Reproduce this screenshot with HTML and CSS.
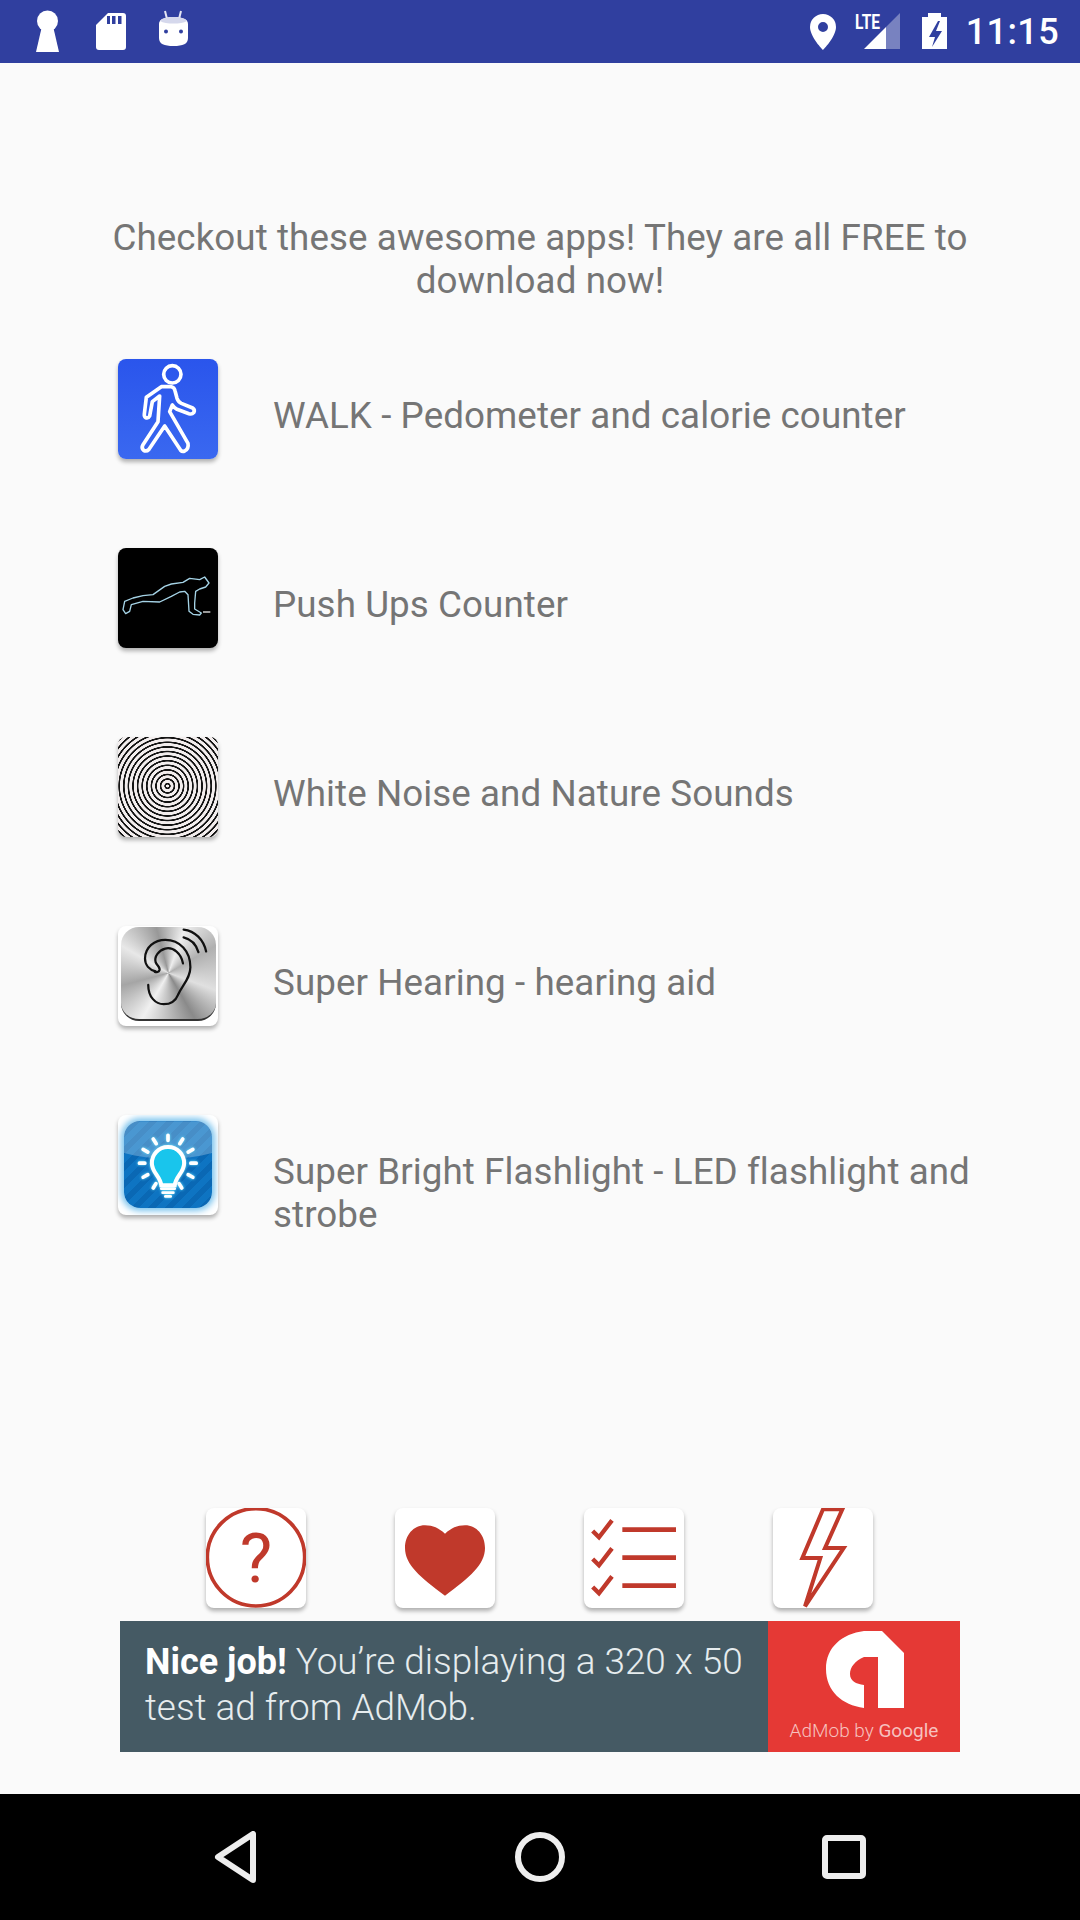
FILE: index.html
```html
<!DOCTYPE html>
<html lang="en">
<head>
<meta charset="utf-8">
<title>Apps</title>
<link rel="stylesheet" href="styles.css">
</head>
<body>
<div class="screen">
  <header class="status">
    <svg class="status-left" viewBox="0 0 200 63" width="200" height="63">
      <circle cx="47.5" cy="21" r="10.5" fill="#fff"/>
      <path d="M42 26h11l6 26H36z" fill="#fff"/>
      <path d="M108 13h15a3 3 0 0 1 3 3v31a3 3 0 0 1-3 3H99a3 3 0 0 1-3-3V25z" fill="#fff"/>
      <path d="M107 16h3v8h-3zM112 16h3.500v8H112zM118 16h3.500v8H118z" fill="#303f9f"/>
      <path d="M165 11l2 8M181 11l-2 8" stroke="#e4e6f3" stroke-width="2" fill="none"/>
      <path d="M159 24c0-5 6-7 14.500-7s14.500 2 14.500 7v14c0 6-5 8-14.500 8s-14.500-2-14.500-8z" fill="#fff"/>
      <path d="M160 21c2-3 7-4 13.500-4s11.500 1 13.500 4c-3 2-8 2.500-13.500 2.500S163 23 160 21z" fill="#d5d8ec"/>
      <circle cx="166" cy="31.500" r="2" fill="#303f9f"/><circle cx="181" cy="31.500" r="2" fill="#303f9f"/>
    </svg>
    <div class="status-right">
      <svg viewBox="800 0 160 63" width="160" height="63">
        <path fill-rule="evenodd" d="M823 14a13 13 0 0 0-13 13c0 10 13 23 13 23s13-13 13-23a13 13 0 0 0-13-13zm0 8a5 5 0 1 1 0 10 5 5 0 0 1 0-10z" fill="#fff"/>
        <text class="lte" x="855" y="29" textLength="25" lengthAdjust="spacingAndGlyphs">LTE</text>
        <path d="M864 49l22-22v22z" fill="#fff"/>
        <path d="M886 27l14-14v36h-14z" fill="#fff" opacity=".35"/>
        <path d="M928 17v-4h13v4h6v32h-25V17z" fill="#fff"/>
        <path d="M938 21l-9 16h6l-3 10 10-16h-6l4-10z" fill="#303f9f"/>
      </svg>
      <span class="clock">11:15</span>
    </div>
  </header>

  <main class="content">
    <p class="intro">Checkout these awesome apps! They are all FREE to download now!</p>
    <ul class="apps">
      <li class="app">
        <div class="tile tile-walk">
          <svg viewBox="55 57 300 300" class="art">
            <circle cx="218" cy="103" r="26" fill="none" stroke="#fff" stroke-width="11"/>
            <path d="M185 140L215 140Q224 142 226 152L232 175Q236 186 245 190L279 204Q287 210 282 218Q277 224 268 221L232 208Q224 204 218 195L210 215L265 310Q268 326 255 333Q248 336 243 331L195 258L148 328Q140 336 132 331Q124 324 130 314L175 245L180 168L158 185L150 228Q146 236 138 233Q133 230 134 222L140 172z" fill="none" stroke="#fff" stroke-width="11" stroke-linejoin="round"/>
          </svg>
        </div>
        <span class="app-name">WALK - Pedometer and calorie counter</span>
      </li>
      <li class="app">
        <div class="tile tile-push">
          <svg viewBox="55 625 300 300" class="art">
            <path d="M75 785L100 775 130 768 160 765 195 740 215 733 250 728 270 716 300 720 315 712 328 730 318 742 300 748 288 755 285 790 285 808 305 820 300 826 280 824 268 815 265 765 255 755 240 757 215 770 180 787 130 785 95 795 90 815 78 822 70 810z" fill="none" stroke="#a5d3e6" stroke-width="4" stroke-linejoin="round"/>
            <path d="M310 817h22" stroke="#999" stroke-width="6"/>
          </svg>
        </div>
        <span class="app-name">Push Ups Counter</span>
      </li>
      <li class="app">
        <div class="tile tile-noise"></div>
        <span class="app-name">White Noise and Nature Sounds</span>
      </li>
      <li class="app">
        <div class="tile tile-hear">
          <div class="metal">
            <svg viewBox="62 52 286 286" class="art">
              <path d="M165 190c-20-5-33-20-33-40 0-35 30-58 63-58 45 0 78 35 78 85 0 35-25 55-38 85-8 20-25 30-45 30-25 0-48-22-48-60" fill="none" stroke="#111" stroke-width="7" stroke-linecap="round"/>
              <path d="M250 165c-5-30-30-52-55-46-20 5-35 25-30 42 3 10 15 15 12 25-2 6-10 8-15 5" fill="none" stroke="#111" stroke-width="7" stroke-linecap="round"/>
              <path d="M252 84c24 6 40 24 46 46M252 60c36 4 62 32 70 68" fill="none" stroke="#111" stroke-width="7" stroke-linecap="round"/>
            </svg>
          </div>
        </div>
        <span class="app-name">Super Hearing - hearing aid</span>
      </li>
      <li class="app">
        <div class="tile tile-bulb">
          <div class="glow">
            <svg viewBox="73 635 262 258" class="art">
              <path d="M73 635h262v95c-80 22-180 22-262 0z" fill="#fff" opacity=".25"/>
              <g class="bulb">
                <g stroke="#fff" stroke-width="11" stroke-linecap="round" fill="none">
                  <path d="M204 677v15M160 688l9 14M130 719l14 8M119 760h16M130 802l14-8M160 834l8-13M248 688l-9 14M278 719l-14 8M288 760h-16M278 802l-14-8M245 834l-8-13"/>
                </g>
                <path d="M204 712c-30 0-48 24-48 48 0 28 25 38 28 66h40c3-28 28-38 28-66 0-24-18-48-48-48z" fill="#19c5ec" stroke="#fff" stroke-width="12"/>
                <path d="M184 836h40M188 848h32M196 859h16" stroke="#fff" stroke-width="8" stroke-linecap="round"/>
              </g>
            </svg>
          </div>
        </div>
        <span class="app-name">Super Bright Flashlight - LED flashlight and strobe</span>
      </li>
    </ul>

    <div class="bottom">
      <nav class="actions">
        <div class="tile tile-white">
          <svg viewBox="48 55 300 300" class="art">
            <circle cx="198" cy="203" r="146" fill="none" stroke="#c0392b" stroke-width="11"/>
            <text class="qmark" x="198" y="277" text-anchor="middle">?</text>
          </svg>
        </div>
        <div class="tile tile-white">
          <svg viewBox="615 55 300 300" class="art">
            <path d="M765 132C745 115 730 107 705 107 670 107 645 137 645 175 645 225 690 262 765 318 840 262 885 225 885 175 885 137 860 107 825 107 800 107 785 115 765 132z" fill="#c0392b"/>
          </svg>
        </div>
        <div class="tile tile-white">
          <svg viewBox="72 55 300 300" class="art">
            <g fill="none" stroke="#c0392b">
              <path d="M187 120h161M187 204h161M187 288h161" stroke-width="14"/>
              <path d="M98 124l19 19 39-51M98 208l19 19 39-51M98 292l19 19 39-51" stroke-width="13"/>
            </g>
          </svg>
        </div>
        <div class="tile tile-white">
          <svg viewBox="640 55 300 300" class="art">
            <path d="M790 59h58l-52 116h56L736 350l46-145h-54z" fill="none" stroke="#c0392b" stroke-width="12"/>
          </svg>
        </div>
      </nav>
      <aside class="ad">
        <p class="ad-text"><b>Nice job!</b> You’re displaying a 320 x 50 test ad from AdMob.</p>
        <div class="ad-brand">
          <svg viewBox="0 0 192 92" width="192" height="92">
            <path d="M96 10h18l22 22v55h-26V36H96c-9 4-14 10-14 17s6 10 14 11v23C74 84 58 70 58 48S74 13 96 10z" fill="#fff"/>
          </svg>
          <span class="ad-by">AdMob by <em>Google</em></span>
        </div>
      </aside>
    </div>
  </main>

  <footer class="nav">
    <svg viewBox="0 0 44 52" width="44" height="52"><path d="M39 3v46L4 26z" fill="none" stroke="#eee" stroke-width="6" stroke-linejoin="round"/></svg>
    <svg viewBox="0 0 52 52" width="52" height="52"><circle cx="26" cy="26" r="22" fill="none" stroke="#eee" stroke-width="6"/></svg>
    <svg viewBox="0 0 44 44" width="44" height="44"><rect x="3" y="3" width="38" height="38" rx="2" fill="none" stroke="#eee" stroke-width="6"/></svg>
  </footer>
</div>
</body>
</html>
```
FILE: styles.css
```css
* { box-sizing: border-box; }
html, body { margin: 0; padding: 0; }
body { font-family: Roboto, "Liberation Sans", sans-serif; background: #fafafa; }
.screen { width: 1080px; height: 1920px; display: flex; flex-direction: column; }

.status { height: 63px; flex: none; background: #303f9f; display: flex; justify-content: space-between; }
.status-left { display: block; }
.status-right { display: flex; align-items: center; padding-right: 21px; }
.lte { font: 700 21px "Roboto", sans-serif; fill: #fff; }
.clock { color: #fff; font-size: 36px; font-weight: 500; letter-spacing: .4px; margin-left: 6px; }

.content { flex: 1; display: flex; flex-direction: column; padding-top: 153px; }
.intro { margin: 0 0 57px; padding: 0 100px; text-align: center; font-size: 36.75px; line-height: 43px; letter-spacing: .08px; color: #757575; }
.apps { list-style: none; margin: 0; padding: 0 80px 0 118px; display: flex; flex-direction: column; gap: 89px; }
.app { display: flex; gap: 55px; align-items: flex-start; min-height: 100px; }
.app-name { font-size: 36.75px; line-height: 43px; letter-spacing: .08px; color: #757575; padding-top: 35px; }

.tile { width: 100px; height: 100px; flex: none; border-radius: 8px; overflow: hidden; box-shadow: 0 3px 4px rgba(0,0,0,.3); }
.art { display: block; width: 100%; height: 100%; }
.tile-walk { background: linear-gradient(#2a55ec, #3a68f0); }
.tile-push { background: #000; }
.tile-noise { background: repeating-radial-gradient(circle at 49.500% 49%, #f3eeee 0, #f3eeee 1.200px, #141414 1.700px, #141414 2.900px, #f3eeee 3.400px, #f3eeee 4.600px); }
.tile-hear { background: #fff; padding: 1px 2.500px 5px; }
.metal { width: 95px; height: 94px; border-radius: 18px; border-bottom: 2px solid #333; background: conic-gradient(from 20deg at 50% 50%, #eeeeee, #b0b0b0 40deg, #e0e0e0 90deg, #8a8a8a 130deg, #f0f0f0 190deg, #a5a5a5 235deg, #e8e8e8 280deg, #989898 325deg, #eeeeee); }
.tile-bulb { background: #fff; padding: 6px 6px 7px; }
.glow { width: 88px; height: 87px; border-radius: 16px; background: repeating-linear-gradient(135deg, #0e74c2 0 6px, #0a68b4 6px 12px); box-shadow: 0 0 6px 3px #7cc4ee; overflow: hidden; }
.bulb { filter: drop-shadow(0 0 4px #6fe6ff); }
.tile-white { background: #fff; }
.qmark { font: 400 206px Roboto, sans-serif; fill: #c0392b; }

.bottom { margin-top: auto; padding-bottom: 42px; display: flex; flex-direction: column; align-items: center; gap: 13px; }
.actions { display: flex; gap: 89px; padding-right: 1px; }
.ad { width: 840px; height: 131px; display: flex; background: #455a64; }
.ad-text { flex: 1; margin: 0; padding: 18px 10px 0 25px; color: #e6ecee; font-size: 36.9px; line-height: 45px; font-weight: 300; }
.ad-text b { font-size: 36px; font-weight: 700; color: #fff; }
.ad-brand { width: 192px; flex: none; background: #e53935; display: flex; flex-direction: column; align-items: center; }
.ad-by { font-size: 19px; font-weight: 300; color: #f7c1bf; white-space: nowrap; margin-top: 6px; }
.ad-by em { font-style: normal; font-weight: 400; }

.nav { height: 126px; flex: none; background: #000; display: grid; grid-template-columns: repeat(3, 304px); justify-content: center; justify-items: center; align-items: center; }
```
